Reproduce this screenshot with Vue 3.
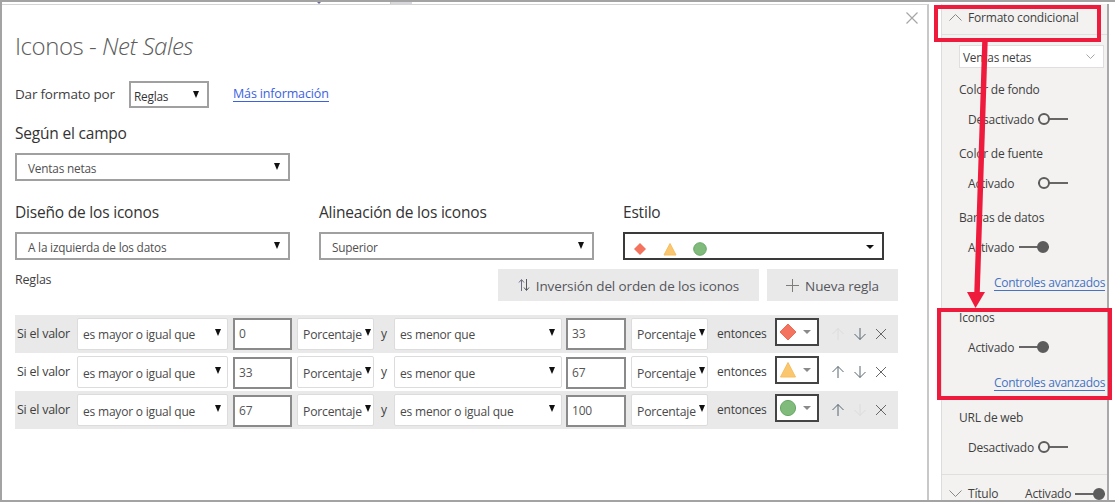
<script setup>
const rules = [
  { from: "0", op2: "es menor que", to: "33", icon: "diamond", up: false, down: true },
  { from: "33", op2: "es menor que", to: "67", icon: "triangle", up: true, down: true },
  { from: "67", op2: "es menor o igual que", to: "100", icon: "circle", up: true, down: false },
];

const sideItems = [
  { title: "Color de fondo", state: "Desactivado", on: false },
  { title: "Color de fuente", state: "Activado", on: false },
  { title: "Barras de datos", state: "Activado", on: true, link: true },
  { title: "Iconos", state: "Activado", on: true, link: true },
  { title: "URL de web", state: "Desactivado", on: false },
];
</script>

<template>
  <div class="screen">
    <i class="behind-caret"></i>
    <i class="behind-tab"></i>
    <main class="dialog">
      <svg class="close" width="14" height="14" viewBox="0 0 14 14">
        <path d="M1.5 1.5l11 11M12.5 1.5l-11 11" stroke="#a6a6a6" stroke-width="1.2" fill="none" />
      </svg>
      <h1 class="title">Iconos - <em>Net Sales</em></h1>

      <div class="format-row">
        <span class="format-label">Dar formato por</span>
        <div class="select small"><span>Reglas</span><i class="caret"></i></div>
        <a class="more">Más información</a>
      </div>

      <h2 class="field-label">Según el campo</h2>
      <div class="select wide"><span>Ventas netas</span><i class="caret"></i></div>

      <div class="three-cols">
        <div class="col">
          <h2>Diseño de los iconos</h2>
          <div class="select wide"><span>A la izquierda de los datos</span><i class="caret"></i></div>
        </div>
        <div class="col">
          <h2>Alineación de los iconos</h2>
          <div class="select wide"><span>Superior</span><i class="caret"></i></div>
        </div>
        <div class="col">
          <h2>Estilo</h2>
          <div class="select style-select">
            <span class="style-icons">
              <svg width="14" height="14" viewBox="0 0 14 14"><path d="M7 1l6 6-6 6-6-6z" fill="#f4735f" /></svg>
              <svg width="14" height="14" viewBox="0 0 14 14"><path d="M7 1.5l6 11.5H1z" fill="#fac76f" stroke="#f6bd60" /></svg>
              <svg width="14" height="14" viewBox="0 0 14 14"><circle cx="7" cy="7" r="6.3" fill="#80bb7c" stroke="#68a865" /></svg>
            </span>
            <i class="caret"></i>
          </div>
        </div>
      </div>

      <div class="rules-head">
        <span class="rules-label">Reglas</span>
        <div class="actions">
          <button class="action invert">
            <svg width="12" height="14" viewBox="0 0 12 14">
              <path d="M3.5 13V2M1 4.5l2.5-3 2.5 3" stroke="#6d6d86" fill="none" />
              <path d="M8.5 1v11M6 9.5l2.5 3 2.5-3" stroke="#55565c" fill="none" />
            </svg>
            <span>Inversión del orden de los iconos</span>
          </button>
          <button class="action add">
            <svg width="13" height="13" viewBox="0 0 13 13"><path d="M6.5 0v13M0 6.5h13" stroke="#807d79" fill="none" /></svg>
            <span>Nueva regla</span>
          </button>
        </div>
      </div>

      <div class="rules">
        <div v-for="rule in rules" :key="rule.from" class="rule">
          <span class="if-label">Si el valor</span>
          <div class="cell op1"><span>es mayor o igual que</span><i class="caret"></i></div>
          <div class="value v1">{{ rule.from }}</div>
          <div class="cell unit"><span>Porcentaje</span><i class="caret"></i></div>
          <span class="and">y</span>
          <div class="cell op2"><span>{{ rule.op2 }}</span><i class="caret"></i></div>
          <div class="value v2">{{ rule.to }}</div>
          <div class="cell unit"><span>Porcentaje</span><i class="caret"></i></div>
          <span class="then">entonces</span>
          <div class="icon-box">
            <svg width="18" height="18" viewBox="0 0 18 18">
              <path v-if="rule.icon === 'diamond'" d="M9 1l8 8-8 8-8-8z" fill="#f4735f" stroke="#ee6a55" />
              <path v-else-if="rule.icon === 'triangle'" d="M9 1.5L16.5 16h-15z" fill="#fac76f" stroke="#f6bd60" />
              <circle v-else cx="9" cy="9" r="7.6" fill="#80bb7c" stroke="#68a865" />
            </svg>
            <i class="mini-caret"></i>
          </div>
          <div class="row-tools">
            <svg width="14" height="14" viewBox="0 0 14 14">
              <path d="M7 13V1.5M1.5 7L7 1.5 12.5 7" :stroke="rule.up ? '#566570' : '#dcdcdc'" fill="none" />
            </svg>
            <svg width="14" height="14" viewBox="0 0 14 14">
              <path d="M7 1v11.5M1.5 7L7 12.5 12.5 7" :stroke="rule.down ? '#566570' : '#dcdcdc'" fill="none" />
            </svg>
            <svg width="12" height="12" viewBox="0 0 12 12">
              <path d="M1 1l10 10M11 1L1 11" stroke="#666" fill="none" />
            </svg>
          </div>
        </div>
      </div>
    </main>

    <aside class="side">
      <div class="side-head">
        <svg width="13" height="7" viewBox="0 0 13 7"><path d="M.5 6.5l6-6 6 6" stroke="#8a8886" fill="none" /></svg>
        <span>Formato condicional</span>
      </div>
      <div class="side-body">
        <div class="side-select">
          <span>Ventas netas</span>
          <svg width="9" height="5" viewBox="0 0 9 5"><path d="M.5.5l4 4 4-4" stroke="#a6a6a6" fill="none" /></svg>
        </div>
        <div v-for="item in sideItems" :key="item.title" class="side-item" :class="{ linked: item.link }">
          <div class="side-title">{{ item.title }}</div>
          <div class="side-state">
            <span class="state-text" :class="{ 'state-long': !item.on }">{{ item.state }}</span>
            <span class="toggle" :class="{ on: item.on }"></span>
          </div>
          <a v-if="item.link" class="side-link">Controles avanzados</a>
        </div>
      </div>
      <div class="side-foot">
        <svg width="13" height="7" viewBox="0 0 13 7"><path d="M.5.5l6 6 6-6" stroke="#8a8886" fill="none" /></svg>
        <span class="foot-title">Título</span>
        <span class="foot-state">Activado</span>
        <span class="toggle on"></span>
      </div>
    </aside>

    <!-- anotaciones rojas encima de la captura -->
    <div class="mark mark-top"></div>
    <div class="mark mark-icons"></div>
    <svg class="arrow" width="30" height="270" viewBox="0 0 30 270">
      <path d="M24 0L16 254" stroke="#ef1b3d" stroke-width="5.5" fill="none" />
      <path d="M6 252h18l-9.5 16z" fill="#ef1b3d" />
    </svg>
  </div>
</template>

<style scoped>
.screen {
  position: relative;
  width: 1115px;
  height: 502px;
  overflow: hidden;
  display: flex;
  box-sizing: border-box;
  background: #fff;
  border-top: 2px solid #a3a3a3;
  border-left: 2px solid #a3a3a3;
  border-bottom: 2px solid #a3a3a3;
  font-family: "Open Sans", "Noto Sans", sans-serif;
  color: #3f3f3f;
}

.behind-caret {
  position: absolute;
  left: 315px;
  top: 0;
  width: 0;
  height: 0;
  border-left: 2px solid transparent;
  border-right: 2px solid transparent;
  border-top: 2px solid #6b6b9a;
}

.behind-tab {
  position: absolute;
  left: 388px;
  top: 0;
  width: 21px;
  height: 2px;
  border-left: 1px solid #c8c8c8;
  background: #d8d8dc;
}

.dialog {
  position: relative;
  width: 927px;
  flex: none;
  box-sizing: border-box;
  margin-top: 2px;
  padding: 0 0 0 13px;
  border-top: 1px solid #d4d4d4;
  border-right: 2px solid #c8c8c8;
}

.close {
  position: absolute;
  top: 6px;
  right: 8px;
}

.title {
  margin: 0;
  padding-top: 24px;
  height: 39px;
  font-size: 24px;
  line-height: 34px;
  font-weight: 300;
  color: #5c5c5c;
  letter-spacing: -0.45px;
}

.title em {
  font-style: italic;
}

.format-row {
  display: flex;
  align-items: center;
  margin-top: 13px;
  height: 27px;
}

.format-label {
  width: 114px;
  font-size: 13.5px;
  letter-spacing: -0.2px;
  margin-top: -2px;
}

.select {
  position: relative;
  display: flex;
  align-items: center;
  justify-content: space-between;
  box-sizing: border-box;
  height: 28px;
  border: 2px solid #a0a0a0;
  background: #fff;
  font-size: 11.8px;
  letter-spacing: -0.2px;
  color: #505050;
  padding: 2px 8px 0 11px;
}

.small {
  width: 80px;
  height: 27px;
  padding-left: 3px;
  color: #333;
}

.wide {
  width: 275px;
}

.caret {
  flex: none;
  width: 0;
  height: 0;
  border-left: 3.5px solid transparent;
  border-right: 3.5px solid transparent;
  border-top: 7px solid #111;
  margin-top: -3px;
}

.more {
  margin-left: 24px;
  margin-top: -2px;
  font-size: 12.5px;
  letter-spacing: -0.15px;
  line-height: 15px;
  color: #3a62e0;
  border-bottom: 1px solid #3a62e0;
}

h2 {
  margin: 0;
  font-size: 15.5px;
  font-weight: 400;
  letter-spacing: -0.2px;
  color: #333;
}

.field-label {
  margin-top: 13px;
  height: 32px;
  line-height: 24px;
}

.three-cols {
  display: flex;
  gap: 29px;
  margin-top: 19px;
}

.col h2 {
  height: 32px;
  line-height: 24px;
}

.style-select {
  width: 261px;
  border-color: #3a3a3a;
  padding-left: 8px;
}

.style-icons {
  display: flex;
  gap: 16px;
  margin-top: 3px;
}

.style-select .caret {
  border-left-width: 4px;
  border-right-width: 4px;
  border-top-width: 4px;
  margin-top: 0;
}

.rules-head {
  position: relative;
  display: flex;
  justify-content: space-between;
  margin-top: 8px;
  padding-top: 1px;
  box-sizing: border-box;
  width: 883px;
  height: 47px;
}

.rules-label {
  font-size: 12.5px;
  letter-spacing: -0.2px;
  line-height: 22px;
}

.actions {
  display: flex;
  gap: 8px;
  height: 32px;
}

.action {
  display: flex;
  align-items: center;
  justify-content: center;
  gap: 6px;
  height: 32px;
  border: 0;
  padding: 0;
  background: #e9e9e9;
  font-family: inherit;
  font-size: 13.5px;
  letter-spacing: -0.12px;
  color: #55565c;
}

.action span {
  margin-top: 2px;
}

.invert {
  width: 261px;
}

.add {
  width: 131px;
}

.rules {
  width: 883px;
}

.rule {
  display: flex;
  align-items: center;
  height: 38px;
  padding-left: 2px;
  box-sizing: border-box;
  font-size: 12px;
  letter-spacing: -0.2px;
}

.rule:nth-child(odd) {
  background: #e9e9e9;
}

.rule:nth-child(n + 2) .cell span,
.rule:nth-child(n + 2) .value {
  position: relative;
  top: 1px;
}

.if-label {
  width: 60px;
  margin-top: -2px;
  font-size: 12.5px;
  letter-spacing: -0.25px;
}

.cell {
  display: flex;
  align-items: center;
  justify-content: space-between;
  box-sizing: border-box;
  height: 32px;
  background: #fff;
  border: 1px solid #dcdcdc;
  border-radius: 2px;
  padding: 0 6px 0 5px;
  color: #4a4a4a;
}

.op1 {
  width: 151px;
}

.op2 {
  width: 168px;
}

.unit {
  width: 77px;
  padding: 0 2px 0 5px;
  font-size: 12.2px;
}

.value {
  box-sizing: border-box;
  height: 32px;
  line-height: 28px;
  border: 2px solid #8a8a8a;
  background: #fff;
  padding-left: 4px;
  color: #555;
}

.v1 {
  width: 59px;
  margin: 0 5px 0 5px;
}

.v2 {
  width: 60px;
  margin: 0 5px 0 4px;
}

.and {
  width: 20px;
  text-align: center;
  margin-top: -2px;
}

.then {
  margin-left: 9px;
  width: 60px;
  margin-top: -2px;
}

.icon-box {
  display: flex;
  align-items: center;
  gap: 6px;
  box-sizing: border-box;
  width: 44px;
  height: 28px;
  margin-top: -4px;
  margin-left: -2px;
  padding-left: 2px;
  border: 2px solid #444;
  background: #fff;
}

.mini-caret {
  width: 0;
  height: 0;
  border-left: 4px solid transparent;
  border-right: 4px solid transparent;
  border-top: 4px solid #8a8a8a;
}

.row-tools {
  display: flex;
  align-items: center;
  gap: 8px;
  margin-left: 12px;
}

.side {
  position: relative;
  width: 168px;
  flex: none;
  box-sizing: border-box;
  margin-left: 12px;
  margin-top: 2px;
  background: #f3f2f1;
  border-left: 1px solid #dcdcdc;
  border-right: 2px solid #a9a9a9;
  font-size: 12px;
  letter-spacing: -0.2px;
  color: #3f3f3f;
  display: flex;
  flex-direction: column;
}

.side-head {
  display: flex;
  align-items: center;
  gap: 6px;
  height: 31px;
  padding: 0 0 3px 7px;
  border-bottom: 1px solid #e1dfdd;
  box-sizing: border-box;
  flex: none;
}

.side-body {
  padding: 10px 0 0 17px;
  height: 440px;
  box-sizing: border-box;
  border-bottom: 1px solid #e1dfdd;
  flex: none;
}

.side-select {
  display: flex;
  align-items: center;
  justify-content: space-between;
  box-sizing: border-box;
  width: 145px;
  height: 23px;
  margin-bottom: 12px;
  padding: 0 8px 0 3px;
  background: #fff;
  border: 1px solid #e1dfdd;
  font-size: 11.8px;
}

.side-item {
  height: 64px;
}

.side-item.linked {
  height: 100px;
}

.side-title {
  height: 29px;
  line-height: 20px;
}

.side-state {
  display: flex;
  align-items: center;
  height: 20px;
  padding-left: 9px;
}

.state-text {
  width: 51px;
}

.state-long {
  width: 70px;
}

.toggle {
  position: relative;
  display: block;
  flex: none;
  width: 30px;
  height: 2px;
  background: #666;
}

.toggle::after {
  content: "";
  position: absolute;
  left: 0;
  top: -5px;
  width: 8px;
  height: 8px;
  box-sizing: content-box;
  border: 2px solid #5c5c5c;
  border-radius: 50%;
  background: #f3f2f1;
}

.toggle.on::after {
  left: auto;
  right: 0;
  background: #5c5c5c;
}

.side-link {
  display: block;
  width: fit-content;
  margin: 19px 0 0 35px;
  font-size: 12px;
  letter-spacing: -0.28px;
  line-height: 14px;
  color: #4472c4;
  border-bottom: 1px solid #4472c4;
}

.side-foot {
  display: flex;
  align-items: center;
  height: 25px;
  padding: 12px 0 0 7px;
  box-sizing: border-box;
  flex: none;
}

.foot-title {
  margin-left: 6px;
  width: 57px;
}

.foot-state {
  width: 50px;
}

.mark {
  position: absolute;
  box-sizing: border-box;
  border: 4px solid #ef1b3d;
}

.mark-top {
  left: 932px;
  top: 3px;
  width: 167px;
  height: 37px;
}

.mark-icons {
  left: 935px;
  top: 306px;
  width: 175px;
  height: 92px;
}

.arrow {
  position: absolute;
  left: 959px;
  top: 38px;
}
</style>
